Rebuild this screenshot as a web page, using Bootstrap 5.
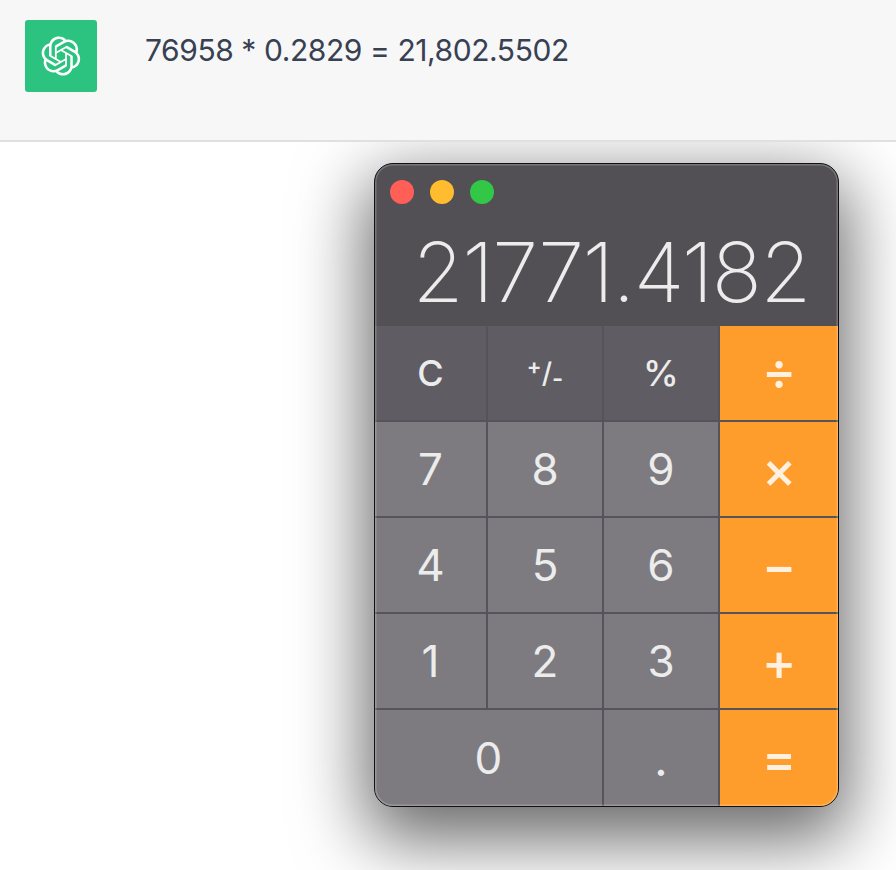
<!doctype html>
<html lang="en">
<head>
<meta charset="utf-8">
<title>Calculator check</title>
<link href="https://cdn.jsdelivr.net/npm/bootstrap@5.3.0/dist/css/bootstrap.min.css" rel="stylesheet">
<style>
html,body{height:870px;overflow:hidden;background:#fff}
.chat-head{height:142px;background:#f7f7f8;border-bottom:2px solid #e0e0e1;padding:20px 0 0 25px;gap:48px;position:relative;z-index:2}
.gpt-logo{width:72px;height:72px;background:#2bc37f;border-radius:3px}
.gpt-logo svg{width:40px;height:40px}
.answer{font-family:Inter,"Liberation Sans",sans-serif;font-size:30px;line-height:60px;color:#374151;letter-spacing:-.43px}
.desk{padding:21px 57px 0 0}
.calc{width:465px;height:644px;border:1px solid #111;border-radius:19px;overflow:hidden;position:relative;background:#525055;box-shadow:0 24px 70px 8px rgba(0,0,0,.6);font-family:Inter,"Liberation Sans",sans-serif;color:#ececec}
.calc::after{content:"";position:absolute;inset:0;border-radius:18px;box-shadow:inset 0 0 0 1.5px rgba(255,255,255,.22);pointer-events:none}
.lights{height:54px;padding:16px 0 0 15px;gap:16px}
.light{width:24px;height:24px;border-radius:50%}
.l-red{background:#ff5f57}.l-amber{background:#febc2e}.l-green{background:#33c748}
.readout{height:108px;font-size:83px;font-weight:200;line-height:108px;text-align:right;padding-right:28px;letter-spacing:-1.6px}
.pad{display:grid;grid-template-columns:111px 114px 114px 118px;grid-template-rows:94px 94px 94px 94px 96px;gap:2px;background:#56545a}
.key{display:flex;align-items:center;justify-content:center;font-size:44px;line-height:1}
.k-top{background:#5f5d63;font-size:36px;font-weight:450}
.k-num{background:#7d7b80}
.k-wide{grid-column:span 2}
.k-op{background:#fe9d2b;color:#fff0e0;font-size:52px;font-weight:500;padding-top:2px}
.k-div{padding-top:0;padding-bottom:4px}
.k-dot{padding-top:4px;font-weight:500}
.frac-up,.frac-down{font-weight:600;line-height:1}
.frac-up{font-size:22px;transform:translateY(-7px)}
.frac-down{font-size:24px;transform:translateY(6px)}
.frac-bar{font-size:28px;font-weight:500}
</style>
</head>
<body>
<header class="chat-head d-flex align-items-start">
  <div class="gpt-logo d-flex align-items-center justify-content-center flex-shrink-0">
    <svg viewBox="0 0 41 41" fill="#fff" aria-hidden="true"><path d="M37.5324 16.8707C37.9808 15.5241 38.1363 14.0974 37.9886 12.6859C37.8409 11.2744 37.3934 9.91076 36.676 8.68622C35.6126 6.83404 33.9882 5.3676 32.0373 4.4985C30.0864 3.62941 27.9098 3.40259 25.8215 3.85078C24.8796 2.7893 23.7219 1.94125 22.4257 1.36341C21.1295 0.785575 19.7249 0.491269 18.3058 0.500197C16.1708 0.495044 14.0893 1.16803 12.3614 2.42214C10.6335 3.67624 9.34853 5.44666 8.6917 7.47815C7.30085 7.76286 5.98686 8.3414 4.8377 9.17505C3.68854 10.0087 2.73073 11.0782 2.02839 12.312C0.956464 14.1591 0.498905 16.2988 0.721698 18.4228C0.944492 20.5467 1.83612 22.5449 3.268 24.1293C2.81966 25.4759 2.66413 26.9026 2.81182 28.3141C2.95951 29.7256 3.40701 31.0892 4.12437 32.3138C5.18791 34.1659 6.8123 35.6322 8.76321 36.5013C10.7141 37.3704 12.8907 37.5973 14.9789 37.1492C15.9208 38.2107 17.0786 39.0587 18.3747 39.6366C19.6709 40.2144 21.0755 40.5087 22.4946 40.4998C24.6307 40.5054 26.7133 39.8321 28.4418 38.5772C30.1704 37.3223 31.4556 35.5506 32.1119 33.5179C33.5027 33.2332 34.8167 32.6547 35.9659 31.821C37.115 30.9874 38.0728 29.9178 38.7752 28.684C39.8458 26.8371 40.3023 24.6979 40.0789 22.5748C39.8556 20.4517 38.9639 18.4544 37.5324 16.8707ZM22.4978 37.8849C20.7443 37.8874 19.0459 37.2733 17.6994 36.1501C17.7601 36.117 17.8666 36.0586 17.936 36.0161L25.9004 31.4156C26.1003 31.3019 26.2663 31.137 26.3813 30.9378C26.4964 30.7386 26.5563 30.5124 26.5549 30.2825V19.0542L29.9213 20.998C29.9389 21.0068 29.9541 21.0198 29.9656 21.0359C29.977 21.052 29.9842 21.0707 29.9867 21.0902V30.3889C29.9842 32.375 29.1946 34.2791 27.7909 35.6841C26.3872 37.0892 24.4838 37.8806 22.4978 37.8849ZM6.39227 31.0064C5.51397 29.4888 5.19742 27.7107 5.49804 25.9832C5.55718 26.0187 5.66048 26.0818 5.73461 26.1244L13.699 30.7248C13.8975 30.8408 14.1233 30.902 14.3532 30.902C14.583 30.902 14.8088 30.8408 15.0073 30.7248L24.731 25.1103V28.9979C24.7321 29.0177 24.7283 29.0376 24.7199 29.0556C24.7115 29.0736 24.6988 29.0893 24.6829 29.1012L16.6317 33.7497C14.9096 34.7416 12.8643 35.0097 10.9447 34.4954C9.02506 33.9811 7.38785 32.7263 6.39227 31.0064ZM4.29707 13.6194C5.17156 12.0998 6.55279 10.9364 8.19885 10.3327C8.19885 10.4013 8.19491 10.5228 8.19491 10.6071V19.808C8.19351 20.0378 8.25334 20.2638 8.36823 20.4629C8.48312 20.6619 8.64893 20.8267 8.84863 20.9404L18.5723 26.5542L15.206 28.4979C15.1894 28.5089 15.1703 28.5155 15.1505 28.5173C15.1307 28.5191 15.1107 28.516 15.0924 28.5082L7.04046 23.8557C5.32135 22.8601 4.06716 21.2235 3.55289 19.3046C3.03862 17.3858 3.30624 15.3413 4.29707 13.6194ZM31.955 20.0556L22.2312 14.4411L25.5976 12.4981C25.6142 12.4872 25.6333 12.4805 25.6531 12.4787C25.6729 12.4769 25.6928 12.4801 25.7111 12.4879L33.7631 17.1364C34.9967 17.849 36.0017 18.8982 36.6606 20.1613C37.3194 21.4244 37.6047 22.849 37.4832 24.2684C37.3617 25.6878 36.8382 27.0432 35.9743 28.1759C35.1103 29.3086 33.9415 30.1717 32.6047 30.6641C32.6047 30.5947 32.6047 30.4733 32.6047 30.3889V21.188C32.6066 20.9586 32.5474 20.7328 32.4332 20.5338C32.319 20.3348 32.154 20.1698 31.955 20.0556ZM35.3055 15.0128C35.2464 14.9765 35.1431 14.9142 35.069 14.8717L27.1045 10.2712C26.906 10.1554 26.6803 10.0943 26.4504 10.0943C26.2206 10.0943 25.9948 10.1554 25.7963 10.2712L16.0726 15.8858V11.9982C16.0715 11.9783 16.0753 11.9585 16.0837 11.9405C16.0921 11.9225 16.1048 11.9068 16.1207 11.8949L24.1719 7.25025C25.4053 6.53903 26.8158 6.19376 28.2383 6.25482C29.6608 6.31589 31.0364 6.78077 32.2044 7.59508C33.3723 8.40939 34.2842 9.53945 34.8334 10.8531C35.3826 12.1667 35.5464 13.6095 35.3055 15.0128ZM14.2424 21.9419L10.8752 19.9981C10.8576 19.9893 10.8423 19.9763 10.8309 19.9602C10.8195 19.9441 10.8122 19.9254 10.8098 19.9058V10.6071C10.8107 9.18295 11.2173 7.78848 11.9819 6.58696C12.7466 5.38544 13.8377 4.42659 15.1275 3.82264C16.4173 3.21869 17.8524 2.99464 19.2649 3.1767C20.6775 3.35876 22.0089 3.93941 23.1034 4.85067C23.0427 4.88379 22.937 4.94215 22.8668 4.98473L14.9024 9.58517C14.7025 9.69878 14.5366 9.86356 14.4215 10.0626C14.3065 10.2616 14.2466 10.4877 14.2479 10.7175L14.2424 21.9419ZM16.071 17.9991L20.4018 15.4978L24.7325 17.9975V22.9985L20.4018 25.4983L16.071 22.9985V17.9991Z"/></svg>
  </div>
  <div class="answer">76958 * 0.2829 = 21,802.5502</div>
</header>
<main class="desk d-flex justify-content-end">
  <section class="calc" aria-label="Calculator">
    <div class="lights d-flex">
      <span class="light l-red"></span><span class="light l-amber"></span><span class="light l-green"></span>
    </div>
    <div class="readout">21771.4182</div>
    <div class="pad">
      <div class="key k-top">C</div><div class="key k-top"><span class="frac-up">+</span><span class="frac-bar">/</span><span class="frac-down">-</span></div><div class="key k-top">%</div><div class="key k-op k-div">÷</div>
      <div class="key k-num">7</div><div class="key k-num">8</div><div class="key k-num">9</div><div class="key k-op">×</div>
      <div class="key k-num">4</div><div class="key k-num">5</div><div class="key k-num">6</div><div class="key k-op">−</div>
      <div class="key k-num">1</div><div class="key k-num">2</div><div class="key k-num">3</div><div class="key k-op">+</div>
      <div class="key k-num k-wide">0</div><div class="key k-num k-dot">.</div><div class="key k-op">=</div>
    </div>
  </section>
</main>
</body>
</html>
